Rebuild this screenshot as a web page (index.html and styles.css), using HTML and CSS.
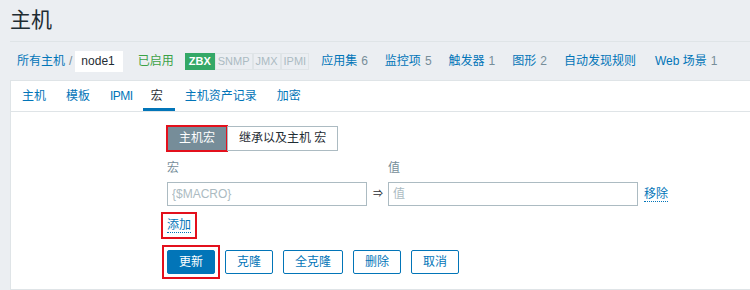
FILE: index.html
```html
<!doctype html>
<html lang="zh-CN">
  <head>
    <meta charset="UTF-8" />
    <title>主机</title>
    <link rel="stylesheet" href="styles.css">
  </head>
  <body>
    <header class="header">
      <h1>主机</h1>
    </header>

    <nav class="crumbs">
      <a class="link" href="#">所有主机</a>
      <span class="sep">/</span>
      <span class="current">node1</span>
      <span class="enabled">已启用</span>
      <span class="badges">
        <span class="badge on">ZBX</span><span class="badge">SNMP</span><span class="badge">JMX</span><span class="badge">IPMI</span>
      </span>
      <a class="link" href="#">应用集<sup>6</sup></a>
      <a class="link" href="#">监控项<sup>5</sup></a>
      <a class="link" href="#">触发器<sup>1</sup></a>
      <a class="link" href="#">图形<sup>2</sup></a>
      <a class="link wide" href="#">自动发现规则</a>
      <a class="link" href="#">Web 场景<sup>1</sup></a>
    </nav>

    <div class="card">
      <ul class="tabs">
        <li><a href="#">主机</a></li>
        <li><a href="#">模板</a></li>
        <li><a href="#" class="narrow">IPMI</a></li>
        <li class="active"><a href="#">宏</a></li>
        <li><a href="#">主机资产记录</a></li>
        <li><a href="#">加密</a></li>
      </ul>

      <form class="form">
        <div class="switch">
          <span class="opt selected mark mark-radio">主机宏</span><span class="opt">继承以及主机 宏</span>
        </div>

        <div class="macros">
          <span class="head">宏</span>
          <span></span>
          <span class="head">值</span>
          <span></span>

          <input class="field macro" type="text" placeholder="{$MACRO}" />
          <span class="arrow">⇒</span>
          <input class="field value" type="text" placeholder="值" />
          <a class="dotted" href="#">移除</a>
        </div>

        <div class="add-row">
          <a class="dotted mark mark-add" href="#">添加</a>
        </div>

        <div class="actions">
          <span class="mark mark-btn"><button type="button" class="btn primary">更新</button></span>
          <button type="button" class="btn">克隆</button>
          <button type="button" class="btn">全克隆</button>
          <button type="button" class="btn">删除</button>
          <button type="button" class="btn">取消</button>
        </div>
      </form>
    </div>
  </body>
</html>
```

FILE: styles.css
```css
* {
  margin: 0;
  padding: 0;
  box-sizing: border-box;
}

body {
  font-family: "Liberation Sans", Arial, "Noto Sans CJK SC", sans-serif;
  font-size: 12px;
  line-height: 16px;
  color: #1f2c33;
  background: #ebeef2;
  overflow: hidden;
}

a {
  color: #0275b8;
  text-decoration: none;
}

.header {
  margin-left: 10px;
  padding: 8px 0 9px;
  border-bottom: 1px solid #dfe4e7;
}

.header h1 {
  font-size: 21px;
  line-height: 24px;
  font-weight: normal;
  color: #1f2c33;
}

/* breadcrumbs + host navigation */
.crumbs {
  display: flex;
  align-items: center;
  height: 38px;
  padding-left: 17px;
  white-space: nowrap;
}

.crumbs sup {
  vertical-align: baseline;
  color: #768d99;
  font-size: 12px;
  margin-left: 4px;
}

.crumbs .link {
  margin-right: 17px;
}

.crumbs .link.wide {
  margin-right: 19px;
}

.crumbs .sep {
  color: #768d99;
  margin: 0 3px 0 -13px;
}

.current {
  background: #fff;
  padding: 3px 8px 3px 6px;
  line-height: 15px;
  margin-right: 15px;
}

.enabled {
  color: #3ba247;
  margin-right: 11px;
}

.badges {
  display: flex;
  margin-right: 12px;
}

.badge {
  border: 1px solid #dfe4e7;
  background: #ebeef2;
  color: #acbbc2;
  font-size: 11px;
  line-height: 15px;
  padding: 0 2px;
}

.badge.on {
  background: #34a867;
  border-color: #34a867;
  color: #fff;
  font-weight: bold;
  padding: 0 3px;
}

/* card */
.card {
  margin-left: 10px;
  background: #fff;
  border: 1px solid #dfe4e7;
  border-right: none;
  height: 210px;
}

.tabs {
  display: flex;
  list-style: none;
  padding-left: 1px;
  border-bottom: 1px solid #dfe4e7;
  height: 31px;
}

.tabs li a {
  display: block;
  padding: 7px 10px 0;
  height: 30px;
}

.tabs li a.narrow {
  letter-spacing: -0.5px;
}

.tabs li.active a {
  color: #1f2c33;
  padding: 7px 12px 0 8px;
  border-bottom: 3px solid #0275b8;
}

.form {
  padding: 14px 0 0 156px;
}

.switch {
  display: flex;
}

.opt {
  height: 25px;
  line-height: 23px;
  border: 1px solid #acbbc2;
  padding: 0 11px;
}

.opt.selected {
  background: #768d99;
  border-color: #768d99;
  color: #fff;
}

.macros {
  display: grid;
  grid-template-columns: 200px 21px 250px auto;
  align-items: center;
  margin-top: 8px;
  row-gap: 5px;
}

.head {
  color: #768d99;
  line-height: 18px;
}

.field {
  height: 24px;
  border: 1px solid #acbbc2;
  padding: 0 4px;
  font: inherit;
  color: #1f2c33;
  outline: none;
}

.field::placeholder {
  color: #acbbc2;
}

.arrow {
  padding-left: 6px;
  font-size: 10px;
}

.macros .dotted {
  margin-left: 6px;
  justify-self: start;
}

.dotted {
  border-bottom: 1px dotted #0275b8;
  line-height: 14px;
}

.add-row {
  height: 24px;
  margin-top: 7px;
  display: flex;
  align-items: center;
}

.actions {
  display: flex;
  gap: 10px;
  margin-top: 13px;
}

.btn {
  height: 24px;
  padding: 0 11px;
  font: inherit;
  background: #fff;
  color: #0275b8;
  border: 1px solid #0275b8;
  border-radius: 2px;
}

.btn.primary {
  background: #0275b8;
  color: #fff;
}

/* red annotation frames */
.mark {
  outline: 2px solid #e3101c;
}

.mark-radio {
  outline-offset: -1px;
}

.mark-add {
  outline-offset: 4px;
}

.mark-btn {
  display: flex;
  outline-offset: 3px;
}
```
